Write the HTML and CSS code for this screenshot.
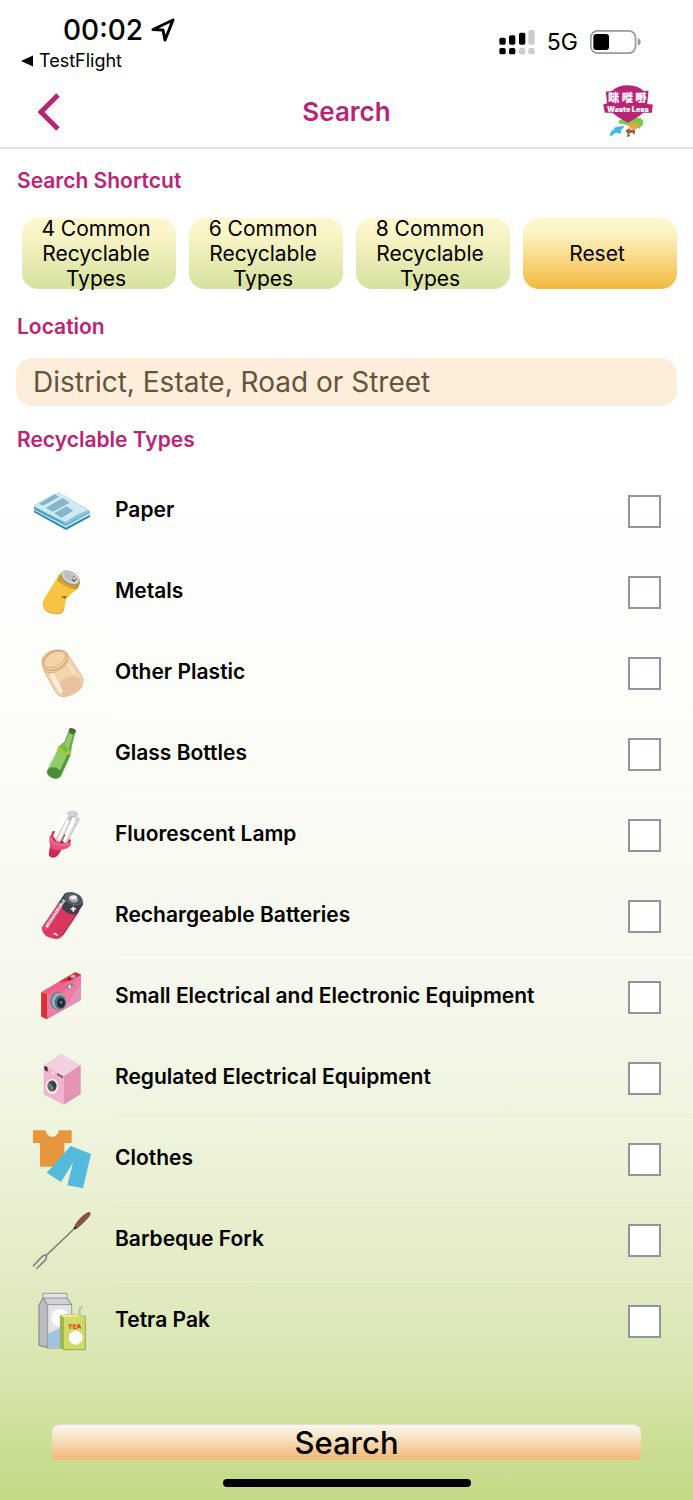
FILE: index.html
```
<!DOCTYPE html>
<html lang="en">
<head>
<meta charset="utf-8">
<meta name="viewport" content="width=device-width, initial-scale=1">
<title>Search</title>
<link rel="stylesheet" href="styles.css">
</head>
<body>
<div class="screen">
  <div class="status">
    <div class="status-left">
      <div class="clock">00:02
        <svg class="locate" viewBox="0 0 24 24" aria-hidden="true"><path d="M2 11.5 22 2 14 22 12 12Z"/></svg>
      </div>
      <a class="return" href="#"><svg viewBox="0 0 12 12" aria-hidden="true"><path d="M0 6 12 0.5V11.5Z"/></svg>TestFlight</a>
    </div>
    <div class="status-right">
      <svg class="signal" viewBox="0 0 106 75" aria-hidden="true">
        <g fill="#000"><rect y="23" width="19" height="21" rx="5"/><rect x="29" y="16" width="19" height="28" rx="5"/><rect x="59" y="8" width="19" height="36" rx="5"/><rect y="54" width="19" height="19" rx="5"/><rect x="29" y="54" width="19" height="19" rx="5"/></g>
        <g fill="#ccc"><rect x="87" y="0" width="19" height="44" rx="5"/><rect x="59" y="54" width="19" height="19" rx="5"/><rect x="87" y="54" width="19" height="19" rx="5"/></g>
      </svg>
      <span class="network">5G</span>
      <svg class="battery" viewBox="0 0 153 72" aria-hidden="true">
        <rect x="2.5" y="2.5" width="134" height="67" rx="20" fill="#fff" stroke="#999" stroke-width="5"/>
        <rect x="10" y="12" width="47" height="48" rx="9"/><path d="M143 25q9 3 9 11t-9 11z" fill="#999"/>
      </svg>
    </div>
  </div>

  <header class="header">
    <button class="back" type="button" aria-label="Back"><svg viewBox="0 0 22 38" aria-hidden="true"><path d="M20 2 3 19 20 36"/></svg></button>
    <h1 class="title">Search</h1>
    <svg class="logo" viewBox="24 30 150 160" role="img" aria-label="Waste Less">
      <path d="M70 139Q85 128 99 134 107 126 120 130 144 125 145 144L143 153Q136 151 136 162 124 160 116 152 100 156 89 149L72 146Z" fill="#76cc4c"/>
      <ellipse cx="116" cy="154" rx="14" ry="10" fill="#f0a43c"/>
      <path d="M44 183Q47 165 57 164L58 158Q71 155 88 153 85 163 78 166 79 177 74 178L68 174Q55 175 52 183Z" fill="#42b9ed"/>
      <path d="M91 168 103 160 106 166 121 164 119 180 112 174 103 175 105 185 95 187 98 177Z" fill="#996335"/>
      <path d="M50 48Q68 31 98 31 130 32 146 48L161 47 157 87 174 89 171 114H145Q130 128 98 144 68 128 52 114H29L24 89 36 85 32 50Z" fill="#b92477"/>
      <g class="logo-cjk"><text x="56" y="80">咪</text><text x="97" y="80">嘥</text><text x="138" y="80">嘢</text></g>
      <text x="99" y="110" class="logo-latin">Waste Less</text>
    </svg>
  </header>

  <form class="content">
    <h2 class="section">Search Shortcut</h2>
    <div class="shortcuts">
      <button class="shortcut" type="button">4 Common Recyclable Types</button>
      <button class="shortcut" type="button">6 Common Recyclable Types</button>
      <button class="shortcut" type="button">8 Common Recyclable Types</button>
      <button class="shortcut reset" type="reset">Reset</button>
    </div>
    <h2 class="section"><label for="location">Location</label></h2>
    <input class="location" id="location" type="text" placeholder="District, Estate, Road or Street">
    <h2 class="section">Recyclable Types</h2>

    <ul class="types">
      <li class="type">
        <svg class="icon" viewBox="33 3 180 180" aria-hidden="true">
          <path d="M42 90 138 142 210 104V111L138 150 42 97Z" fill="#2f87b2"/>
          <path d="M42 84 138 136 210 98V103L138 143 42 91Z" fill="#bce5f1"/>
          <path d="M42 79 136 128 208 91V99L138 137 42 88Z" fill="#4aa4c9"/>
          <path d="M42 75 115 36 207 91 203 99 137 134 125 121Z" fill="#8bc5da"/>
          <path d="M42 75 115 36 204 91Q170 102 137 126 131 124 126 119Z" fill="#d1eaf2"/>
          <path d="M56 71 104 43 117 50 69 77ZM77 84 128 54 149 68 99 95ZM103 99 139 79 160 92 124 113Z" fill="#82b4cb"/>
          <path d="M83 86 134 57M91 91 142 62M110 103 146 83M117 108 153 88" stroke="#a0c8d8"/>
        </svg>
        <label class="name" for="t1">Paper</label><input class="check" id="t1" type="checkbox">
      </li>
      <li class="type">
        <svg class="icon" viewBox="33 246 180 180" aria-hidden="true">
          <path d="M118 284Q93 322 71 359 63 377 75 389 94 405 118 401 130 398 133 386L138 357Q157 337 173 326L180 306Q168 283 142 274 125 273 118 284Z" fill="#f6c442"/>
          <path d="M118 284Q111 295 115 303 137 323 168 328 178 321 180 306Z" fill="#bd9230"/>
          <path d="M117 285Q125 319 167 320" fill="none" stroke="#d8a637" stroke-width="5"/>
          <ellipse cx="151" cy="293" rx="29" ry="17" fill="#d8d9db" stroke="#8d8d8d" stroke-width="2" transform="rotate(29 151 293)"/>
          <ellipse cx="151" cy="291" rx="22" ry="12" fill="#bdc0c3" transform="rotate(29 151 291)"/>
          <path d="M159 288 171 298 164 306 156 301Z" fill="#6f5949"/><path d="M153 292 165 293 168 303Z" fill="#eee"/>
          <path d="M123 351 140 347 137 356Z" fill="#8d5e18"/><path d="M74 389Q93 404 119 400 130 397 132 386" fill="none" stroke="#d99c2b" stroke-width="3"/>
        </svg>
        <label class="name" for="t2">Metals</label><input class="check" id="t2" type="checkbox">
      </li>
      <li class="type">
        <svg class="icon" viewBox="33 489 180 180" aria-hidden="true">
          <path d="M67 547Q61 530 88 515 120 503 140 519L186 588Q195 607 180 628 155 650 126 650 115 649 105 634L73 574Z" fill="#f4d5ab" stroke="#d7a375" stroke-width="2"/>
          <path d="M124 602Q151 582 177 593 190 605 183 624 160 647 128 648 112 626 124 602Z" fill="#e9c19b"/>
          <ellipse cx="105" cy="541" rx="40" ry="27" fill="#f0cea1" stroke="#cf9c6c" stroke-width="3" transform="rotate(-29 105 541)"/>
          <ellipse cx="104" cy="538" rx="34" ry="21" fill="#f3d3a8" stroke="#daa572" stroke-width="2" transform="rotate(-29 104 538)"/>
          <path d="M72 571Q80 582 106 576 142 561 144 533" fill="none" stroke="#dcaf80" stroke-width="3"/>
          <path d="M97 586 122 633" stroke="#fceddc" stroke-width="13" stroke-linecap="round"/><path d="M146 556 162 579" stroke="#f9e5cc" stroke-width="7" stroke-linecap="round"/>
        </svg>
        <label class="name" for="t3">Other Plastic</label><input class="check" id="t3" type="checkbox">
      </li>
      <li class="type">
        <svg class="icon" viewBox="33 12 180 180" aria-hidden="true">
          <path d="M148 28Q155 23 167 33L164 44 155 80 153 103 124 167Q118 178 102 176 83 170 80 155L110 96 116 80 133 65Z" fill="#64a946"/>
          <path d="M148 36 160 41 147 84 144 103 118 155 84 148 112 94 120 82 135 68Z" fill="#8dcc67"/>
          <path d="M110 94 116 79Q135 90 153 92V105Q132 105 110 94Z" fill="#a8c43f"/><path d="M122 83 134 72 146 90 137 97Z" fill="#78b84c"/>
          <ellipse cx="102" cy="158" rx="21" ry="16" fill="#4a8d3b" transform="rotate(18 102 158)"/>
          <path d="M108 104 86 145" stroke="#9eda7c" stroke-width="4"/><path d="M146 104 120 160" stroke="#52943c" stroke-width="7"/><ellipse cx="157" cy="32" rx="11" ry="7" fill="#4d672f" transform="rotate(20 157 32)"/>
          <path d="M148 38 162 43" stroke="#315f2c" stroke-width="3"/>
        </svg>
        <label class="name" for="t4">Glass Bottles</label><input class="check" id="t4" type="checkbox">
      </li>
      <li class="type">
        <svg class="icon" viewBox="33 255 180 180" aria-hidden="true">
          <path d="M92 370 124 378 123 393 112 408Q93 420 86 404L88 391Z" fill="#d83459"/>
          <path d="M89 389Q104 401 120 393M87 397Q101 409 116 401M87 405Q97 414 109 408" fill="none" stroke="#a9254a" stroke-width="3"/>
          <path d="M98 334 151 361 152 376Q133 397 100 386 84 374 89 350Z" fill="#e8517e"/>
          <path d="M98 334Q133 331 153 363 139 378 117 374 91 364 98 334Z" fill="#d52239"/>
          <g fill="none" stroke-linecap="round"><path d="M116 358 150 288Q155 278 164 283" stroke="#b8bbc2" stroke-width="18"/><path d="M110 352 140 290Q148 277 162 281" stroke="#cfd1d5" stroke-width="15"/><path d="M105 347 139 286" stroke="#fff" stroke-width="11"/><path d="M137 363 173 298" stroke="#d0d2d8" stroke-width="13"/><path d="M133 361 161 305" stroke="#fff" stroke-width="9"/><path d="M117 358 144 303" stroke="#f7f7fa" stroke-width="9"/></g>
          <path d="M91 355Q104 383 152 370" fill="none" stroke="#f06c93" stroke-width="7"/>
        </svg>
        <label class="name" for="t5">Fluorescent Lamp</label><input class="check" id="t5" type="checkbox">
      </li>
      <li class="type">
        <svg class="icon" viewBox="33 498 180 180" aria-hidden="true">
          <path d="M135 520Q155 512 175 525 192 538 188 555L125 650Q115 661 95 654 68 649 65 623Z" fill="#db3660"/>
          <path d="M135 520Q155 512 175 525 192 538 188 555L169 584Q147 585 132 571 118 563 116 548Z" fill="#3c4048"/>
          <path d="M68 621 119 549 128 562 76 636Z" fill="#e0486e"/><path d="M177 572 126 648" stroke="#b9264e" stroke-width="4"/>
          <ellipse cx="161" cy="536" rx="27" ry="17" fill="#4f565d" stroke="#777d80" stroke-width="2" transform="rotate(20 161 536)"/>
          <ellipse cx="160" cy="537" rx="15" ry="10" fill="#aaa9bf" transform="rotate(20 160 537)"/><ellipse cx="161" cy="532" rx="10" ry="6" fill="#f1f0f7"/>
          <path d="M160 560V575M152 567H168M101 640 113 646" stroke="#fff" stroke-width="5"/>
          <text class="battery-text" x="83" y="624" transform="rotate(-57 83 624)">RECHARGEABLE</text>
        </svg>
        <label class="name" for="t6">Rechargeable Batteries</label><input class="check" id="t6" type="checkbox">
      </li>
      <li class="type">
        <svg class="icon" viewBox="33 21 180 180" aria-hidden="true">
          <path d="M64 97 166 37 183 44V119L81 177 64 170Z" fill="#d94970"/>
          <path d="M81 102 183 44V119L81 177Z" fill="#ed7da2"/><path d="M64 97 81 103V178L64 169Z" fill="#dc3031"/>
          <path d="M64 97 166 37 183 44 81 103Z" fill="#ec608a"/><path d="M115 67 166 37 183 44 150 62Z" fill="#dc3030"/>
          <path d="M128 151 183 73V119Z" fill="#e493ba"/><path d="M82 105 174 53 114 108Z" fill="#e8658f"/>
          <ellipse cx="113" cy="123" rx="23" ry="27" fill="#6d8799"/><ellipse cx="117" cy="124" rx="21" ry="24" fill="#a0b2bf"/><ellipse cx="121" cy="127" rx="17" ry="21" fill="#536e82"/><ellipse cx="123" cy="129" rx="12" ry="15" fill="#1d2b36"/><circle cx="123" cy="127" r="4" fill="#71808a"/>
          <path d="M140 81 159 69 161 78 144 87Z" fill="#6f8ca0"/><circle cx="149" cy="80" r="4" fill="#e8f1f5"/><ellipse cx="159" cy="49" rx="8" ry="5" fill="#a7bac5"/><ellipse cx="148" cy="56" rx="5" ry="3" fill="#471f30"/>
        </svg>
        <label class="name" for="t7">Small Electrical and Electronic Equipment</label><input class="check" id="t7" type="checkbox">
      </li>
      <li class="type">
        <svg class="icon" viewBox="33 264 180 180" aria-hidden="true">
          <path d="M71 316 123 281 182 315 131 349Z" fill="#f3d0df"/><path d="M71 316 131 349V434L71 403Z" fill="#f0b4ce"/><path d="M131 349 182 315V403L131 434Z" fill="#e493b5"/>
          <path d="M73 317 83 322V335L73 329Z" fill="#502b38"/><path d="M88 325 108 336V346L88 336Z" fill="#e2bccd"/><path d="M112 339 129 348V355L112 346Z" fill="#67424e"/>
          <path d="M117 344 121 346M124 348 127 349" stroke="#fff" stroke-width="2"/><circle cx="100" cy="339" r="3" fill="#fff"/>
          <ellipse cx="96" cy="379" rx="19" ry="23" fill="#f2f4f4"/><ellipse cx="96" cy="378" rx="14" ry="17" fill="#636b6b"/><path d="M88 367Q106 358 109 378 106 395 97 391 106 382 96 377Z" fill="#394041"/><path d="M86 371Q96 375 99 389" fill="none" stroke="#949d9d" stroke-width="3"/>
        </svg>
        <label class="name" for="t8">Regulated Electrical Equipment</label><input class="check" id="t8" type="checkbox">
      </li>
      <li class="type">
        <svg class="icon" viewBox="33 42 180 180" aria-hidden="true">
          <path d="M39 46H76Q82 66 97 66 112 66 117 46H155V84H133V155H60V84H39Z" fill="#e8963e"/>
          <path d="M152 93 213 117 189 220 142 211 159 143 123 201 80 173Z" fill="#54badb"/>
        </svg>
        <label class="name" for="t9">Clothes</label><input class="check" id="t9" type="checkbox">
      </li>
      <li class="type">
        <svg class="icon" viewBox="33 285 180 180" aria-hidden="true">
          <path d="M165 339 78 422M39 454 68 423Q78 418 79 423 81 430 77 434L49 462" fill="none" stroke="#828483" stroke-width="5"/>
          <path d="M163 333Q178 306 203 292 211 289 212 297 210 308 170 342Z" fill="#855148"/><circle cx="165" cy="339" r="4" fill="#201713"/>
        </svg>
        <label class="name" for="t10">Barbeque Fork</label><input class="check" id="t10" type="checkbox">
      </li>
      <li class="type">
        <svg class="icon" viewBox="33 528 180 180" aria-hidden="true">
          <g stroke="#777" stroke-width="2" stroke-linejoin="round"><path d="M69 535H141V549L155 569V699H83L57 691V570L69 549Z" fill="#e4e4e6"/><path d="M69 549 83 571V697L57 691V570Z" fill="#b9bcc1"/><path d="M69 549H141L155 569H83Z" fill="#cfd1d5"/></g>
          <path d="M84 656 132 632V696H84Z" fill="#9dc5df"/><circle cx="120" cy="608" r="26" fill="#fff"/>
          <path d="M179 604V581Q179 577 188 577" fill="none" stroke="#b9c2ae" stroke-width="6"/>
          <path d="M121 602 150 598 196 604V704H132L121 698Z" fill="#cedb67" stroke="#7e8b3d" stroke-width="2"/><path d="M121 602 132 607V704L121 698Z" fill="#9fb948"/><path d="M121 602 150 598 196 604 132 607Z" fill="#f0ef8e"/>
          <circle cx="167" cy="668" r="21" fill="#fff"/><text class="tea" x="145" y="643" transform="rotate(-4 145 643)">TEA</text>
        </svg>
        <label class="name" for="t11">Tetra Pak</label><input class="check" id="t11" type="checkbox">
      </li>
    </ul>
    <button class="submit" type="submit">Search</button>
  </form>
  <div class="home"></div>
</div>
</body>
</html>
```
FILE: styles.css
```
* { box-sizing: border-box; }
body { margin: 0; font-family: Inter, "Noto Sans CJK TC", sans-serif; color: #000; }
button, input { font: inherit; color: inherit; }
button { border: 0; cursor: pointer; }

.screen {
  min-height: 100vh;
  display: flex;
  flex-direction: column;
  background: linear-gradient(#fff 0, #fff 30%, #fcfdf8 48%, #f6f8ee 64%, #eff4de 75%, #e2ebc4 85%, #d5e4a8 93%, #cbdf96 96%, #c3d986 100%);
}

.status {
  height: 76px;
  display: flex;
  justify-content: space-between;
  padding: 12px 52px 0 21px;
  background: #fff;
}
.clock {
  display: flex;
  align-items: center;
  gap: 8px;
  padding-left: 42px;
  font-size: 28px;
  font-weight: 500;
  line-height: 36px;
}
.locate { width: 24px; height: 24px; fill: none; stroke: #000; stroke-width: 3; stroke-linejoin: round; }
.return {
  display: flex;
  align-items: center;
  gap: 6px;
  color: #000;
  font-size: 18px;
  line-height: 26px;
  text-decoration: none;
}
.return svg { width: 12px; height: 12px; }
.status-right { display: flex; align-items: center; gap: 12px; height: 60px; }
.signal { width: 36px; height: 25px; }
.network { font-size: 23px; line-height: 28px; }
.battery { width: 51px; height: 24px; }

.header {
  height: 73px;
  display: grid;
  grid-template-columns: 68px 1fr 60px;
  align-items: center;
  padding: 0 40px 0 32px;
  background: #fff;
  border-bottom: 2px solid #e0e0e0;
}
.back { display: flex; padding: 0 6px; background: none; }
.back svg { width: 22px; height: 38px; fill: none; stroke: #b92477; stroke-width: 5; }
.title { margin: 0; color: #b92477; font-size: 26px; font-weight: 600; line-height: 32px; text-align: center; }
.logo { width: 50px; height: 53px; justify-self: end; }
.logo-cjk { fill: #fff; font: 900 34px/1 "Noto Sans CJK TC", sans-serif; text-anchor: middle; }
.logo-latin { fill: #fff; font: 900 22px Inter, sans-serif; text-anchor: middle; }

.content { flex: 1; display: flex; flex-direction: column; }
.section { margin: 0; padding: 0 17px; color: #b92477; font-size: 21px; font-weight: 600; line-height: 28px; }
.content > .section:first-child { margin-top: 18px; }
.shortcuts {
  display: grid;
  grid-template-columns: repeat(4, 1fr);
  gap: 13px;
  margin: 23px 16px 24px 22px;
}
.shortcut {
  height: 71px;
  display: flex;
  align-items: center;
  justify-content: center;
  padding: 0 20px 0 14px;
  border-radius: 16px;
  background: linear-gradient(#fff7cd 0, #fbf5c8 20%, #d6e19f 100%);
  font-size: 21px;
  line-height: 25px;
}
.reset { background: linear-gradient(#fff8cf 0, #fdf4c4 20%, #f4b93e 100%); }
.location {
  height: 48px;
  margin: 17px 16px 20px;
  padding: 0 17px;
  border: 0;
  border-radius: 16px;
  background: #fceeda;
  font-size: 28px;
}
.location::placeholder { color: #65533b; opacity: 1; }

.types { margin: 17px 0 0; padding: 0; list-style: none; }
.type { height: 81px; display: flex; align-items: center; padding: 0 32px 0 31px; position: relative; }
.type + .type::before { content: ""; position: absolute; top: 0; left: 115px; right: 0; height: 1px; background: rgba(255, 255, 255, .4); }
.icon { width: 60px; height: 60px; flex: none; align-self: flex-start; margin-top: 10px; }
.name { flex: 1; padding: 0 24px 4px; font-size: 21px; font-weight: 600; line-height: 28px; }
.check { appearance: none; width: 33px; height: 33px; margin: 0; border: 2px solid #91959c; background: #fff; }
.check:checked { background: #b92477; box-shadow: inset 0 0 0 4px #fff; }
.battery-text { fill: #fff; font: 900 12px Inter, sans-serif; }
.tea { fill: #e2442e; font: 900 19px Inter, sans-serif; }

.submit {
  height: 36px;
  margin: auto 52px 0;
  padding: 0;
  border-radius: 8px 8px 4px 4px;
  background: linear-gradient(#faf6ec 0, #f7ead2 25%, #f3bd80 90%, #efbd83 100%);
  border-top: 1px solid #dedfd6;
  font-size: 31px;
  font-weight: 500;
  line-height: 35px;
}
.home { width: 248px; height: 8px; margin: 19px auto 13px; border-radius: 4px; background: #000; }
```
